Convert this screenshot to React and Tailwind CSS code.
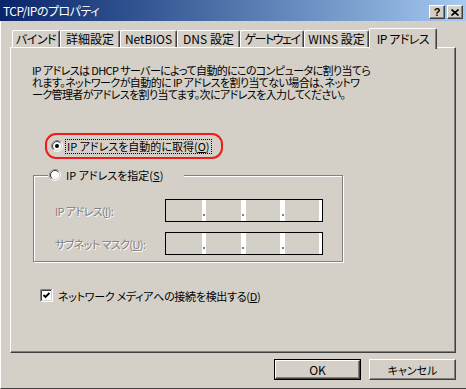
import React from 'react';

const font = "[font-family:'Noto_Sans_CJK_JP','Noto_Sans',sans-serif] [font-feature-settings:'palt']";

const Radio = ({ checked }) => (
  <svg width="12" height="12" viewBox="0 0 12 12" className="shrink-0">
    <circle cx="6" cy="6" r="5.5" fill="none" stroke="#ffffff" />
    <path d="M2.1 9.9 A5.5 5.5 0 0 1 9.9 2.1" fill="none" stroke="#808080" />
    <circle cx="6" cy="6" r="4.5" fill="#ffffff" stroke="#d4d0c8" />
    <path d="M2.8 9.2 A4.5 4.5 0 0 1 9.2 2.8" fill="none" stroke="#404040" />
    {checked && <circle cx="6" cy="6" r="2" fill="#000000" />}
  </svg>
);

const Checkbox = () => (
  <svg width="13" height="13" viewBox="0 0 13 13" className="shrink-0">
    <rect x="0" y="0" width="13" height="13" fill="#ffffff" />
    <path d="M0.5 12.5 V0.5 H12.5" fill="none" stroke="#808080" />
    <path d="M1.5 11.5 V1.5 H11.5" fill="none" stroke="#404040" />
    <path d="M1 12.5 H12.5 V0" fill="none" stroke="#ffffff" />
    <path d="M2 11.5 H11.5 V1" fill="none" stroke="#d4d0c8" />
    <path d="M3.5 6 L5.5 8 L9.5 4" fill="none" stroke="#000000" strokeWidth="1.8" />
  </svg>
);

const IpField = () => (
  <div className="flex w-[158px] h-[23px] border border-black bg-white">
    <div className="w-[36px] bg-[#d4d0c8]" />
    <div className="w-[4px] relative"><span className="absolute left-[1px] top-[14px] w-[2px] h-[2px] bg-[#808080]" /></div>
    <div className="w-[35px] bg-[#d4d0c8]" />
    <div className="w-[5px] relative"><span className="absolute left-[1px] top-[14px] w-[2px] h-[2px] bg-[#808080]" /></div>
    <div className="w-[34px] bg-[#d4d0c8]" />
    <div className="w-[5px] relative"><span className="absolute left-[2px] top-[14px] w-[2px] h-[2px] bg-[#808080]" /></div>
    <div className="w-[34px] bg-[#d4d0c8]" />
    <div className="w-[3px]" />
  </div>
);

const tabs = [
  { label: 'バインド', w: 'w-[48px] tracking-[-0.5px]' },
  { label: '詳細設定', w: 'w-[60px]' },
  { label: 'NetBIOS', w: 'w-[57px]' },
  { label: 'DNS 設定', w: 'w-[63px]' },
  { label: 'ゲートウェイ', w: 'w-[64px] tracking-[-1.5px]' },
  { label: 'WINS 設定', w: 'w-[65px]' },
];

export default function App() {
  return (
    <div className={`w-[466px] h-[389px] bg-[#d4d0c8] flex flex-col text-[11px] text-black ${font}`}>
      {/* title bar */}
      <div className="h-[21px] shrink-0 flex items-start bg-gradient-to-r from-[#0a246a] to-[#a6caf0] pl-[3px] pr-[3px]">
        <span className="text-white text-[12px] tracking-[-0.5px] leading-[12px] mt-[5px]">TCP/IPのプロパティ</span>
        <div className="ml-auto flex gap-[2px] mt-[5px]">
          <div className="w-[16px] h-[14px] bg-[#d4d0c8] border border-t-white border-l-white border-r-[#404040] border-b-[#404040] shadow-[inset_-1px_-1px_0_#808080] flex items-center justify-center text-[11px] leading-none font-bold [font-family:'Liberation_Sans',sans-serif]">?</div>
          <div className="w-[16px] h-[14px] bg-[#d4d0c8] border border-t-white border-l-white border-r-[#404040] border-b-[#404040] shadow-[inset_-1px_-1px_0_#808080] flex items-center justify-center">
            <svg width="8" height="7" viewBox="0 0 8 7">
              <path d="M0.5 0.5 L7.5 6.5 M7.5 0.5 L0.5 6.5" stroke="#000" strokeWidth="1.6" />
            </svg>
          </div>
        </div>
      </div>

      <div className="flex-1 flex flex-col border-l border-white border-b border-b-[#404040]">
        {/* tabs */}
        <div className="mt-[7px] h-[19px] flex items-end pl-[11px] text-[12px]">
          {tabs.map((t) => (
            <div
              key={t.label}
              className={`${t.w} h-[17px] flex items-center justify-center border-t border-l border-white border-r border-r-[#404040] shadow-[inset_-1px_0_0_#808080] rounded-tl-[2px] rounded-tr-[2px] whitespace-nowrap leading-[12px]`}
            >
              {t.label}
            </div>
          ))}
          <div className="w-[68px] h-[21px] -mb-[2px] relative z-10 bg-[#d4d0c8] flex items-start justify-center pt-[4px] border-t border-l border-white border-r border-r-[#404040] shadow-[inset_-1px_0_0_#808080] rounded-tl-[2px] rounded-tr-[2px] whitespace-nowrap leading-[12px] tracking-[-0.5px]">
            IP アドレス
          </div>
        </div>

        {/* panel */}
        <div className="ml-[9px] w-[446px] h-[306px] border-t border-l border-white border-r border-b border-r-[#404040] border-b-[#404040] shadow-[inset_-1px_-1px_0_#808080] flex flex-col">
          <div className="pl-[21px] pt-[16px] leading-[12px] whitespace-nowrap tracking-[-0.6px]">
            <div>IP アドレスは DHCP サーバーによって自動的にこのコンピュータに割り当てら</div>
            <div>れます。ネットワークが自動的に IP アドレスを割り当てない場合は、ネットワ</div>
            <div>ーク管理者がアドレスを割り当てます。次にアドレスを入力してください。</div>
          </div>

          {/* auto radio (highlighted) */}
          <div className="ml-[34px] mt-[33px] w-[178px] h-[26px] border-2 border-[#ee1c1c] rounded-[11px] flex items-center pl-[4px] gap-[2px]">
            <Radio checked />
            <span className="border border-dotted border-black px-[1px] h-[15px] flex items-center leading-[12px] whitespace-nowrap">
              IP アドレスを自動的に取得(<span className="underline">O</span>)
            </span>
          </div>

          {/* manual group */}
          <fieldset className="ml-[22px] mt-[9px] w-[310px] border border-[#808080] shadow-[1px_1px_0_#ffffff,inset_1px_1px_0_#ffffff] pb-[6px]">
            <legend className="ml-[14px] pl-[1px] w-[136px] bg-[#d4d0c8] flex items-center gap-[5px] h-[14px] leading-[12px] whitespace-nowrap">
              <Radio />
              <span>IP アドレスを指定(<span className="underline">S</span>)</span>
            </legend>
            <div className="mt-[17px] pl-[21px] flex flex-col gap-[10px] text-[#808080] [text-shadow:1px_1px_0_#ffffff] leading-[12px] tracking-[-0.6px]">
              <div className="flex items-center">
                <span className="w-[110px] whitespace-nowrap">IP アドレス(<span className="underline">I</span>):</span>
                <IpField />
              </div>
              <div className="flex items-center">
                <span className="w-[110px] whitespace-nowrap">サブネット マスク(<span className="underline">U</span>):</span>
                <IpField />
              </div>
            </div>
          </fieldset>

          <div className="ml-[29px] mt-[27px] flex items-center gap-[5px] leading-[12px] whitespace-nowrap tracking-[-0.3px]">
            <Checkbox />
            <span>ネットワーク メディアへの接続を検出する(<span className="underline">D</span>)</span>
          </div>
        </div>

        {/* buttons */}
        <div className="ml-[9px] w-[446px] mt-[6px] flex justify-end gap-[8px]">
          <button className="w-[87px] h-[21px] border border-black flex">
            <span className="flex-1 flex items-center justify-center border border-t-white border-l-white border-r-[#404040] border-b-[#404040] shadow-[inset_-1px_-1px_0_#808080] leading-[12px] text-[12px]">OK</span>
          </button>
          <button className="w-[87px] h-[21px] flex items-center justify-center border border-t-white border-l-white border-r-[#404040] border-b-[#404040] shadow-[inset_-1px_-1px_0_#808080] leading-[12px]">
            キャンセル
          </button>
        </div>
      </div>
    </div>
  );
}
